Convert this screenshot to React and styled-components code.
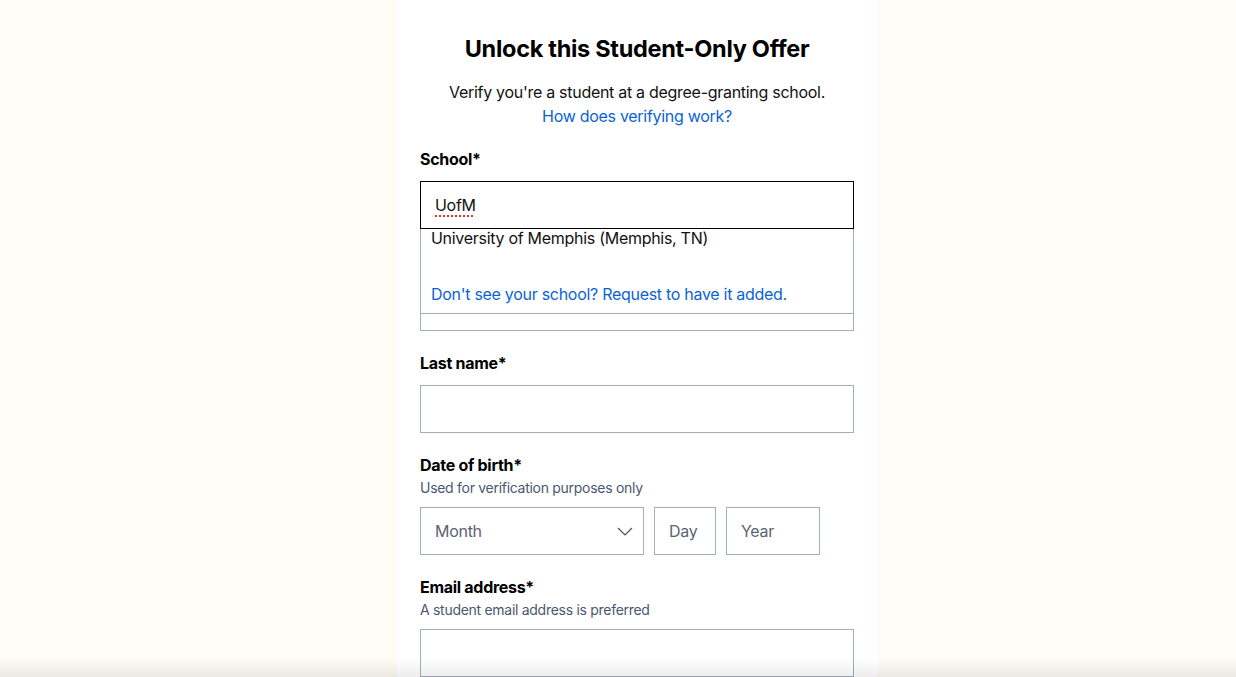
import React from "react";
import styled, { createGlobalStyle } from "styled-components";

const GlobalStyle = createGlobalStyle`
  html, body {
    margin: 0;
    padding: 0;
    background: #fffcf6;
    font-family: Inter, "Noto Sans", "Liberation Sans", sans-serif;
    letter-spacing: -0.018em;
    color: #111;
    overflow: hidden;
  }
  * { box-sizing: border-box; }
`;

const Page = styled.div`
  min-height: 100vh;
  background: #fffcf6;
`;

const Panel = styled.main`
  width: 480px;
  min-height: 100vh;
  margin-left: calc(50% - 221px);
  background: #fff;
  padding: 35px 23px 40px;
`;

const Title = styled.h1`
  margin: 0 0 17px;
  font-size: 23.5px;
  line-height: 28px;
  font-weight: 700;
  text-align: center;
  color: #000;
`;

const Intro = styled.p`
  margin: 0;
  font-size: 16px;
  line-height: 24px;
  text-align: center;
  color: #111;
`;

const Link = styled.a`
  color: #0a63d6;
  text-decoration: none;
  cursor: pointer;
`;

const Form = styled.form`
  margin-top: 20px;
  display: flex;
  flex-direction: column;
  gap: 21px;
`;

const Field = styled.div`
  position: relative;
  display: flex;
  flex-direction: column;
`;

const Label = styled.label`
  font-size: 16px;
  line-height: 23px;
  font-weight: 700;
  color: #000;
  margin-bottom: ${(p) => (p.$hasHint ? "1px" : "10px")};
`;

const Hint = styled.div`
  font-size: 14px;
  line-height: 20px;
  color: #4a5770;
  margin-bottom: 9px;
`;

const Input = styled.div`
  height: 48px;
  width: ${(p) => p.$width || "100%"};
  flex-shrink: 0;
  border: 1px solid ${(p) => (p.$focused ? "#000" : "#a3adc0")};
  background: #fff;
  display: flex;
  align-items: center;
  padding: 0 14px;
  font-size: 16px;
  color: ${(p) => (p.$placeholder ? "#5c6370" : "#111")};
`;

const Misspelled = styled.span`
  text-decoration: underline dotted #e0392b;
  text-decoration-thickness: 2px;
  text-underline-offset: 4px;
`;

const InputWrap = styled.div`
  position: relative;
  z-index: 2;
`;

const Listbox = styled.div`
  position: absolute;
  top: 100%;
  left: 0;
  right: 0;
  background: #fff;
  border: 1px solid #a3adc0;
  border-top: none;
  padding: 0 10px 8px;
`;

const Option = styled.div`
  font-size: 16px;
  line-height: 18px;
  color: #111;
  margin-bottom: 36px;
`;

const RequestLink = styled(Link)`
  display: block;
  font-size: 16px;
  line-height: 22px;
`;

const DateRow = styled.div`
  display: flex;
  gap: 10px;
`;

const Select = styled(Input)`
  justify-content: space-between;
  padding-right: 10px;
`;

const BottomFade = styled.div`
  position: fixed;
  left: 0;
  right: 0;
  bottom: 0;
  height: 18px;
  background: linear-gradient(rgba(0, 0, 0, 0), rgba(0, 0, 0, 0.07));
  pointer-events: none;
`;

const Chevron = () => (
  <svg width="16" height="9" viewBox="0 0 16 9" fill="none">
    <path d="M1 1l7 7 7-7" stroke="#4a5160" strokeWidth="1.2" />
  </svg>
);

export default function App() {
  return (
    <Page>
      <GlobalStyle />
      <Panel>
        <Title>Unlock this Student-Only Offer</Title>
        <Intro>Verify you're a student at a degree-granting school.</Intro>
        <Intro>
          <Link>How does verifying work?</Link>
        </Intro>

        <Form>
          <Field>
            <Label>School*</Label>
            <InputWrap>
              <Input $focused>
                <Misspelled>UofM</Misspelled>
              </Input>
              <Listbox>
                <Option>University of Memphis (Memphis, TN)</Option>
                <RequestLink>Don't see your school? Request to have it added.</RequestLink>
              </Listbox>
            </InputWrap>
          </Field>

          <Field>
            <Label>First name*</Label>
            <Input />
          </Field>

          <Field>
            <Label>Last name*</Label>
            <Input />
          </Field>

          <Field>
            <Label $hasHint>Date of birth*</Label>
            <Hint>Used for verification purposes only</Hint>
            <DateRow>
              <Select $width="224px" $placeholder>
                Month
                <Chevron />
              </Select>
              <Input $width="62px" $placeholder>Day</Input>
              <Input $width="94px" $placeholder>Year</Input>
            </DateRow>
          </Field>

          <Field>
            <Label $hasHint>Email address*</Label>
            <Hint>A student email address is preferred</Hint>
            <Input />
          </Field>
        </Form>
      </Panel>
      <BottomFade />
    </Page>
  );
}
